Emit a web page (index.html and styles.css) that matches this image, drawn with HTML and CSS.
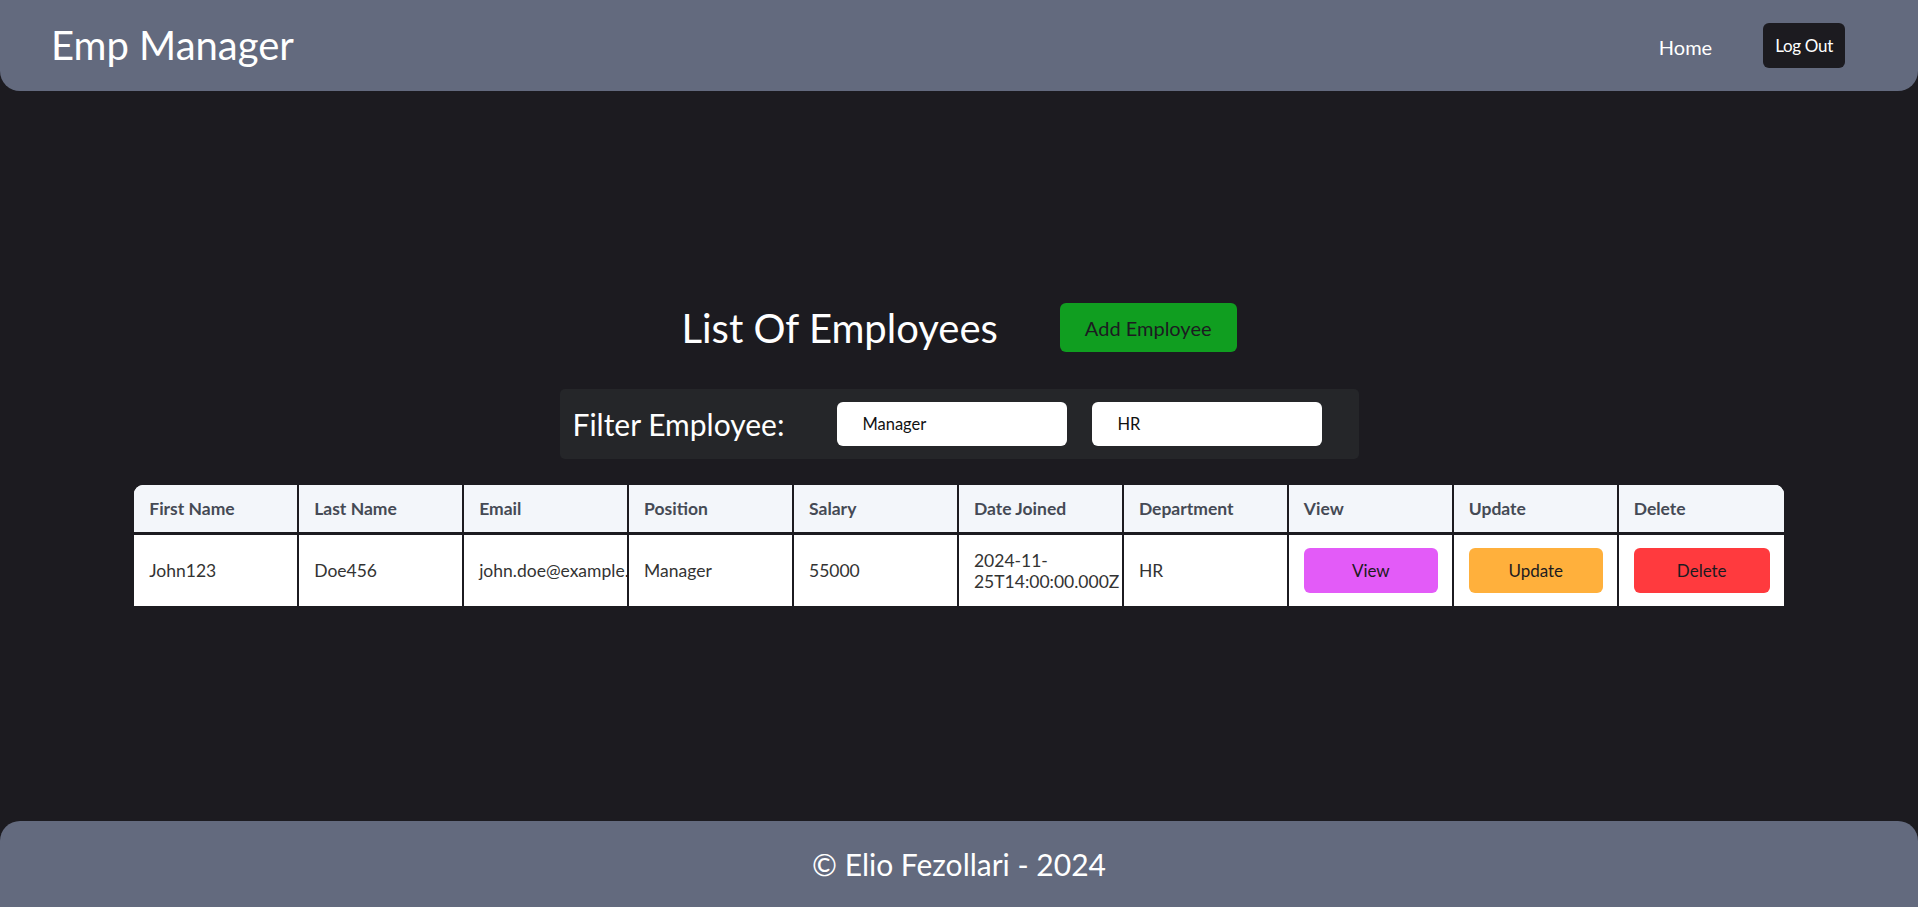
FILE: index.html
```html
<!DOCTYPE html>
<html lang="en">
<head>
<meta charset="utf-8">
<title>Emp Manager</title>
<link rel="stylesheet" href="styles.css">
</head>
<body>
<header class="navbar">
  <div class="brand">Emp Manager</div>
  <nav class="nav-links">
    <a class="nav-home" href="#">Home</a>
    <button class="btn-logout">Log Out</button>
  </nav>
</header>
<main class="content">
  <div class="title-row">
    <h2 class="page-title">List Of Employees</h2>
    <button class="btn-add">Add Employee</button>
  </div>
  <div class="filter-bar">
    <span class="filter-label">Filter Employee:</span>
    <input class="filter-input" type="text" value="Manager">
    <input class="filter-input" type="text" value="HR">
  </div>
  <table class="emp-table">
    <thead>
      <tr>
        <th>First Name</th>
        <th>Last Name</th>
        <th>Email</th>
        <th>Position</th>
        <th>Salary</th>
        <th>Date Joined</th>
        <th>Department</th>
        <th>View</th>
        <th>Update</th>
        <th>Delete</th>
      </tr>
    </thead>
    <tbody>
      <tr>
        <td>John123</td>
        <td>Doe456</td>
        <td>john.doe@example.com</td>
        <td>Manager</td>
        <td>55000</td>
        <td>2024-11-25T14:00:00.000Z</td>
        <td>HR</td>
        <td><button class="btn-row btn-view">View</button></td>
        <td><button class="btn-row btn-update">Update</button></td>
        <td><button class="btn-row btn-delete">Delete</button></td>
      </tr>
    </tbody>
  </table>
</main>
<footer class="footer">
  <p class="footer-text">© Elio Fezollari - 2024</p>
</footer>
</body>
</html>
```

FILE: styles.css
```css
* { box-sizing: border-box; }

html, body { height: 100%; }

body {
  margin: 0;
  background: #1c1b20;
  font-family: Lato, "Open Sans", sans-serif;
  color: #ffffff;
  min-height: 100vh;
  display: flex;
  flex-direction: column;
}

.navbar {
  height: 91px;
  flex: none;
  background: #636a7e;
  border-bottom-left-radius: 20px;
  border-bottom-right-radius: 20px;
  display: flex;
  align-items: center;
  justify-content: space-between;
  padding: 0 73px 0 51px;
}

.brand {
  font-size: 40px;
  color: #ffffff;
  line-height: 1;
  margin-top: -2px;
}

.nav-links {
  display: flex;
  align-items: center;
  gap: 51px;
}

.nav-home {
  color: #ffffff;
  text-decoration: none;
  font-size: 20px;
  margin-top: 3px;
}

.btn-logout {
  background: #1c1b20;
  color: #ffffff;
  border: none;
  border-radius: 6px;
  font-family: Lato, sans-serif;
  font-size: 17px;
  letter-spacing: -0.3px;
  height: 45px;
  padding: 0 12px;
}

.content {
  flex: 1;
  display: flex;
  flex-direction: column;
  align-items: center;
  justify-content: center;
  padding-bottom: 3px;
}

.title-row {
  display: flex;
  align-items: center;
  gap: 62px;
}

.page-title {
  margin: 0;
  font-size: 40px;
  font-weight: 400;
  line-height: 1.1;
  color: #ffffff;
}

.btn-add {
  background: #109e20;
  color: #1c1b20;
  border: none;
  border-radius: 6px;
  font-family: Lato, sans-serif;
  font-size: 20px;
  height: 49px;
  padding: 0 25px;
}

.filter-bar {
  margin-top: 37px;
  width: 799px;
  height: 70px;
  background: #252629;
  border-radius: 5px;
  display: flex;
  align-items: center;
  padding: 0 13px;
}

.filter-label {
  flex: none;
  white-space: nowrap;
  font-size: 30px;
  color: #ffffff;
  margin-right: 53px;
}

.filter-input {
  flex: none;
  width: 230px;
  height: 44px;
  border: none;
  border-radius: 6px;
  background: #ffffff;
  font-family: Lato, sans-serif;
  font-size: 16.5px;
  color: #111;
  padding: 0 25px;
  outline: none;
}

.filter-input + .filter-input {
  margin-left: 25px;
}

.emp-table {
  margin-top: 26px;
  width: 86%;
  table-layout: fixed;
  border-collapse: separate;
  border-spacing: 0;
  border-radius: 9px 9px 0 0;
  overflow: hidden;
  background: #ffffff;
}

.emp-table th,
.emp-table td {
  text-align: left;
  padding: 0 14px 0 15px;
  border-right: 2px solid #1c1b20;
  overflow: hidden;
  font-size: 17.5px;
}

.emp-table th:last-child,
.emp-table td:last-child {
  border-right: none;
}

.emp-table th {
  height: 50px;
  background: #f3f6fa;
  color: #454a55;
  font-weight: 700;
  border-bottom: 3px solid #1c1b20;
}

.emp-table td {
  height: 71px;
  color: #333333;
  background: #ffffff;
  line-height: 1.2;
}

.btn-row {
  width: 100%;
  height: 45px;
  border: none;
  border-radius: 6px;
  font-family: Lato, sans-serif;
  font-size: 17px;
  color: #1c1b20;
}

.btn-view { background: #e35bf8; }
.btn-update { background: #ffb03c; }
.btn-delete { background: #ff3a3e; }

.footer {
  height: 86px;
  flex: none;
  background: #636a7e;
  border-top-left-radius: 20px;
  border-top-right-radius: 20px;
  display: flex;
  align-items: center;
  justify-content: center;
}

.footer-text {
  margin: 0;
  font-size: 30px;
  color: #ffffff;
}
```
